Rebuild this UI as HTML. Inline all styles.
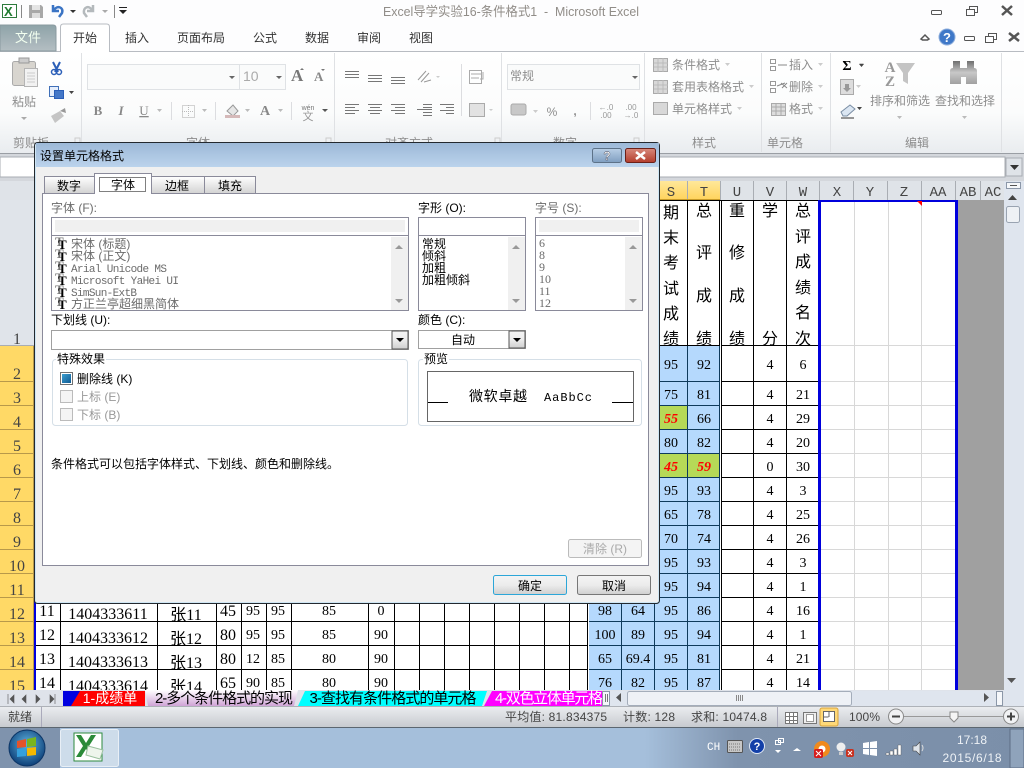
<!DOCTYPE html>
<html lang="zh"><head><meta charset="utf-8"><title>Excel</title>
<style>
html,body{margin:0;padding:0;background:#fff;width:1024px;height:768px;overflow:hidden}
svg{display:block}
text{font-family:"Liberation Sans","WenQuanYi Zen Hei","Noto Sans CJK SC",sans-serif;font-size:12px;fill:#000;white-space:pre}
.g{fill:#8d8d8d}.t{fill:#333}.r{fill:#6b6b6b}.rl{fill:#777}
.m{text-anchor:middle}
.n{font-family:"Liberation Serif","Noto Serif CJK SC",serif;font-size:14px;text-anchor:middle;fill:#000}
.b{font-family:"Liberation Serif","WenQuanYi Zen Hei",serif;font-size:16px;text-anchor:middle;fill:#000}
.h{font-family:"Liberation Serif",serif;font-size:16px;text-anchor:middle;fill:#444}
.c{font-family:"Liberation Mono",serif;font-size:14px;text-anchor:middle;fill:#444}
.v{font-family:"WenQuanYi Zen Hei","Noto Sans CJK SC",sans-serif;font-size:16px;text-anchor:middle;fill:#000}
.red{font-family:"Liberation Serif",serif;font-size:14px;font-weight:bold;font-style:italic;fill:#f00;text-anchor:middle}
.mo{font-family:"Liberation Mono","WenQuanYi Zen Hei",monospace;font-size:11px}
.sz{font-family:"Liberation Serif",serif;font-size:12px;fill:#6b6b6b}
.tg{font-family:"Liberation Serif",serif;font-size:13px;font-weight:bold;fill:#777}
.tb{font-family:"Liberation Serif",serif;font-size:13px;font-weight:bold;fill:#000}
.st{fill:#444}.w{fill:#fff}
</style></head><body>
<svg width="1024" height="768" viewBox="0 0 1024 768" xmlns="http://www.w3.org/2000/svg">
<defs>
<linearGradient id="rib" x1="0" y1="0" x2="0" y2="1"><stop offset="0" stop-color="#fff"/><stop offset=".6" stop-color="#fbfcfc"/><stop offset="1" stop-color="#e9ecef"/></linearGradient>
<linearGradient id="file" x1="0" y1="0" x2="0" y2="1"><stop offset="0" stop-color="#8ea3a8"/><stop offset="1" stop-color="#b4bec2"/></linearGradient>
<linearGradient id="ti" x1="0" y1="0" x2="0" y2="1"><stop offset="0" stop-color="#9db9d8"/><stop offset="1" stop-color="#bbd3ec"/></linearGradient>
<linearGradient id="hy" x1="0" y1="0" x2="0" y2="1"><stop offset="0" stop-color="#ffe89a"/><stop offset="1" stop-color="#ffd35b"/></linearGradient>
<linearGradient id="tab" x1="0" y1="0" x2="0" y2="1"><stop offset="0" stop-color="#fff"/><stop offset="1" stop-color="#d2d2d2"/></linearGradient>
<linearGradient id="bt" x1="0" y1="0" x2="0" y2="1"><stop offset="0" stop-color="#f4f4f4"/><stop offset=".5" stop-color="#ececec"/><stop offset="1" stop-color="#cfcfcf"/></linearGradient>
<linearGradient id="sb" x1="0" y1="0" x2="0" y2="1"><stop offset="0" stop-color="#eceef1"/><stop offset="1" stop-color="#c6c9ce"/></linearGradient>
<linearGradient id="tk" x1="0" y1="0" x2="1" y2="0"><stop offset="0" stop-color="#a5bfdb"/><stop offset=".63" stop-color="#a5bfdb"/><stop offset=".72" stop-color="#7f93ad"/><stop offset="1" stop-color="#7b8fa9"/></linearGradient>
<linearGradient id="tb2" x1="0" y1="0" x2="0" y2="1"><stop offset="0" stop-color="#fff"/><stop offset="1" stop-color="#cfa4d6"/></linearGradient>
<linearGradient id="xr" x1="0" y1="0" x2="0" y2="1"><stop offset="0" stop-color="#d8897c"/><stop offset="1" stop-color="#b33d2c"/></linearGradient>
<linearGradient id="qb" x1="0" y1="0" x2="0" y2="1"><stop offset="0" stop-color="#b9cfe6"/><stop offset="1" stop-color="#7f9ec0"/></linearGradient>
<radialGradient id="orb" cx=".5" cy=".4" r=".6"><stop offset="0" stop-color="#5fb4e0"/><stop offset="1" stop-color="#0d3f78"/></radialGradient>
<linearGradient id="chk" x1="0" y1="0" x2="1" y2="1"><stop offset="0" stop-color="#3d9fd0"/><stop offset="1" stop-color="#0e5a93"/></linearGradient>
<linearGradient id="bn" x1="0" y1="0" x2="0" y2="1"><stop offset="0" stop-color="#6f6f6f"/><stop offset=".5" stop-color="#c8c8c8"/><stop offset="1" stop-color="#a0a0a0"/></linearGradient>
</defs>

<!-- window chrome -->
<rect width="1024" height="768" fill="#fdfdfe"/>
<rect x="0" y="52" width="1024" height="101" fill="url(#rib)"/>
<rect x="0" y="51" width="1024" height="1" fill="#b8bcc2"/>
<rect x="0" y="153" width="1024" height="28" fill="#d4d7dc"/>
<rect x="0" y="153" width="1024" height="1" fill="#9a9ea4"/>
<rect x="0" y="157" width="1005" height="20" fill="#fff" stroke="#a9adb3"/>
<rect x="1006" y="158" width="16" height="18" fill="#dfe3e8" stroke="#a9adb3"/>
<path d="M1010 165h9l-4.500 5z" fill="#333"/>

<!-- QAT -->
<rect x="2.500" y="4.500" width="14" height="13" fill="#fff" stroke="#2d7a3c"/><text x="4" y="16" style="font-size:13px;font-weight:bold;fill:#1f7a2f">X</text>
<path d="M21.500 5v13M114.500 5v13" stroke="#888"/>
<path d="M29 5h12l2 2v11H29z" fill="#a8a8a8"/><rect x="32" y="5" width="8" height="5" fill="#e4e4e4"/><rect x="32" y="13" width="8" height="5" fill="#ddd"/>
<path d="M53 5v6h6M54 10c3-5 10-3 8 3l-3 4" fill="none" stroke="#3b74c4" stroke-width="2.500"/>
<path d="M70 10h6l-3 3z" fill="#333"/>
<path d="M93 5v6h-6M92 10c-3-5-9-3-8 3l3 4" fill="none" stroke="#b4b9bc" stroke-width="2.500"/>
<path d="M102 10h6l-3 3z" fill="#aaa"/>
<path d="M119 7h8v1h-8zM119 10h8l-4 4z" fill="#222"/>
<text x="383" y="16" style="font-size:13px;fill:#918d88" textLength="256" lengthAdjust="spacingAndGlyphs">Excel导学实验16-条件格式1  -  Microsoft Excel</text>
<!-- win controls -->
<g fill="none" stroke="#555"><rect x="931.500" y="10.500" width="10" height="4" rx="1"/><rect x="966.500" y="9.500" width="8" height="6"/><path d="M969.500 9V6.500h8v6H975"/><path d="M1002 6l10 9M1012 6l-10 9" stroke-width="2.500"/>
<rect x="964.500" y="36.500" width="10" height="4" rx="1"/><rect x="985.500" y="36.500" width="8" height="6"/><path d="M988.500 36v-2.500h8v6H994"/><path d="M1009 33l10 8M1019 33l-10 8" stroke-width="2.500"/><path d="M921 39l4-4 4 4-1.500 1h-5z" stroke-width="1.500"/></g>
<circle cx="947" cy="37" r="8" fill="#3f78c8" stroke="#8eaedc"/><text x="947" y="42" class="m" style="font-size:13px;font-weight:bold;fill:#fff">?</text>

<!-- tabs -->
<path d="M0 25h53q3 0 3 3v23H0z" fill="url(#file)" stroke="#8a9aa0"/>
<text x="28" y="42" class="m" style="font-size:13px;fill:#f2fff0">文件</text>
<path d="M60.500 52V27q0-3 3-3h43q3 0 3 3v25" fill="#fff" stroke="#b8bcc2"/><rect x="61" y="50" width="48" height="3" fill="#fff"/>
<g class="t"><text x="85" y="42" class="m t">开始</text><text x="137" y="42" class="m t">插入</text><text x="201" y="42" class="m t">页面布局</text><text x="265" y="42" class="m t">公式</text><text x="317" y="42" class="m t">数据</text><text x="369" y="42" class="m t">审阅</text><text x="421" y="42" class="m t">视图</text></g>

<!-- group separators -->
<path d="M81.500 53v99M334.500 53v99M501.500 53v99M644.500 53v99M761.500 53v99M830.500 53v99M1001.500 53v99" stroke="#dfe1e4"/>
<path d="M171.500 102v18M215.500 102v18M291.500 102v18M461.500 64v52M590.500 102v18" stroke="#dcdde0"/>

<!-- clipboard -->
<rect x="12.500" y="61.500" width="23" height="24" rx="2" fill="#d8d5cf" stroke="#aaa"/><rect x="19" y="58" width="10" height="5" fill="#ccc" stroke="#999"/><rect x="24.500" y="68.500" width="13" height="18" fill="#f2f2f2" stroke="#b5b5b5"/><path d="M27 73h8M27 76h8M27 79h8M27 82h8" stroke="#ccc"/>
<text x="24" y="106" class="m g">粘贴</text><path d="M21 117h6l-3 3z" fill="#aaa"/>
<path d="M53 62l5 10M60 62l-5 10" stroke="#2b5fb8" stroke-width="2"/><circle cx="54" cy="72" r="2.500" fill="none" stroke="#2b5fb8" stroke-width="1.500"/><circle cx="59" cy="72" r="2.500" fill="none" stroke="#2b5fb8" stroke-width="1.500"/>
<rect x="49.500" y="86.500" width="9" height="10" fill="#e5eefc" stroke="#4070b8"/><rect x="54.500" y="90.500" width="9" height="8" fill="#4478c8" stroke="#2b5fb8"/><path d="M69 91h5l-2.500 3z" fill="#444"/>
<path d="M51 116l9-5 4 5-9 7z" fill="#c5c5c5"/><path d="M60 111l5-3 1 5z" fill="#999"/>
<text x="31" y="147" class="m g">剪贴板</text>

<!-- font group -->
<rect x="87.500" y="64.500" width="152" height="25" fill="#fafbfb" stroke="#dfe2e5"/><rect x="239.500" y="64.500" width="46" height="25" fill="#fafbfb" stroke="#dfe2e5"/>
<path d="M229 76h6l-3 3zM276 76h6l-3 3z" fill="#666"/><text x="243" y="81" style="font-size:14px;fill:#aaa">10</text>
<text x="291" y="81" style="font-family:'Liberation Serif',serif;font-size:17px;font-weight:bold;fill:#777">A</text><path d="M300 70l2-2 2 2z" fill="#777"/>
<text x="314" y="81" style="font-family:'Liberation Serif',serif;font-size:13px;font-weight:bold;fill:#888">A</text><path d="M321 69h4l-2 2z" fill="#777"/>
<text x="98" y="115" class="m" style="font-family:'Liberation Serif',serif;font-size:13px;font-weight:bold;fill:#888">B</text>
<text x="121" y="115" class="m" style="font-family:'Liberation Serif',serif;font-size:13px;font-style:italic;font-weight:bold;fill:#888">I</text>
<text x="144" y="115" class="m" style="font-family:'Liberation Serif',serif;font-size:13px;fill:#888;text-decoration:underline">U</text>
<path d="M157 109h5l-2.500 3zM202 109h5l-2.500 3zM245 109h5l-2.500 3zM278 109h5l-2.500 3z" fill="#bbb"/><path d="M322 109h6l-3 3z" fill="#555"/>
<rect x="182.500" y="105.500" width="12" height="12" fill="none" stroke="#aaa" stroke-dasharray="1 1"/><path d="M188.500 105v12M182 111.500h12" stroke="#bbb" stroke-dasharray="1 1"/>
<path d="M227 111l6-6 5 6-5 5z" fill="#e6e6e6" stroke="#999"/><rect x="225" y="115" width="15" height="3" fill="#d5b9b9"/>
<text x="265" y="115" style="font-family:'Liberation Serif',serif;font-size:14px;font-weight:bold;fill:#888" class="m">A</text>
<text x="308" y="110" class="m" style="font-size:7px;fill:#777">wén</text><text x="308" y="120" class="m" style="font-size:11px;fill:#999">文</text>
<text x="198" y="147" class="m g">字体</text>

<!-- alignment -->
<g stroke="#777" fill="none">
<path d="M345 71.500h14M345 74.500h14M345 77.500h14"/><path d="M368 75.500h14M368 78.500h14M368 81.500h14"/><path d="M391 77.500h14M391 80.500h14M391 83.500h14"/>
<path d="M345 104.500h14M345 107.500h10M345 110.500h14M345 113.500h10"/><path d="M368 104.500h14M370 107.500h10M368 110.500h14M370 113.500h10"/><path d="M391 104.500h14M395 107.500h10M391 110.500h14M395 113.500h10"/>
<path d="M423 104.500h9M423 107.500h9M417 109.500h15M423 112.500h9M423 115.500h9"/><path d="M440 104.500h14M446 107.500h8M440 110.500h14M446 113.500h8"/>
<path d="M418 80l8-9M421 82l8-9M424 82l7-2" stroke="#999"/>
<rect x="469.500" y="70.500" width="12" height="13" stroke="#aaa"/><path d="M471 74h10M471 78h8" stroke="#aaa"/><path d="M483 72v7h-3" stroke="#aaa"/>
<rect x="469.500" y="103.500" width="15" height="13" stroke="#aaa" fill="#e2e2e2"/>
</g>
<path d="M436 76h4l-2 2zM489 109h4l-2 2z" fill="#ccc"/>
<text x="409" y="147" class="m g">对齐方式</text>

<!-- number -->
<rect x="507.500" y="64.500" width="132" height="25" fill="#fafbfb" stroke="#dfe2e5"/><text x="510" y="80" class="g">常规</text><path d="M632 76h6l-3 3z" fill="#666"/>
<rect x="511" y="104" width="15" height="11" rx="2" fill="#c8c8c8" stroke="#aaa"/><path d="M533 110h5l-2.500 3z" fill="#ccc"/>
<text x="552" y="116" class="m g" style="font-size:12px">%</text><text x="575" y="115" class="m g" style="font-weight:bold">,</text>
<text x="606" y="110" class="m" style="font-size:8px;fill:#999">←.0</text><text x="606" y="118" class="m" style="font-size:8px;fill:#999">.00</text>
<text x="631" y="110" class="m" style="font-size:8px;fill:#999">.00</text><text x="631" y="118" class="m" style="font-size:8px;fill:#999">→.0</text>
<text x="565" y="147" class="m g">数字</text>

<!-- style -->
<g fill="#d8d8d8" stroke="#aaa"><rect x="653.500" y="58.500" width="14" height="13"/><rect x="653.500" y="80.500" width="14" height="13"/><rect x="653.500" y="102.500" width="14" height="12"/></g>
<path d="M658 58v14M663 58v14M654 63h14M654 67h14M658 80v14M663 80v14M654 85h14M654 89h14" stroke="#bbb"/>
<text x="672" y="69" class="g">条件格式</text><text x="672" y="91" class="g">套用表格格式</text><text x="672" y="113" class="g">单元格样式</text>
<path d="M725 63h5l-2.500 3zM749 85h5l-2.500 3zM737 107h5l-2.500 3zM818 63h5l-2.500 3zM818 85h5l-2.500 3zM818 107h5l-2.500 3zM859 63h5l-2.500 3zM856 85h5l-2.500 3z" fill="#ccc"/><path d="M859 64h5l-2.500 3z" fill="#444"/><path d="M857 107h5l-2.500 3z" fill="#444"/>
<text x="704" y="147" class="m g">样式</text>

<!-- cells -->
<g fill="#fff" stroke="#999"><rect x="770.500" y="59.500" width="5" height="4"/><rect x="770.500" y="66.500" width="5" height="4"/><rect x="770.500" y="81.500" width="5" height="4"/><rect x="770.500" y="88.500" width="5" height="4"/></g>
<path d="M778 65h9M777 86l8-3M781 83l6 5M787 83l-5 5" stroke="#888"/>
<g fill="#ddd" stroke="#aaa"><rect x="771.500" y="103.500" width="14" height="12"/></g><path d="M776 103v12M781 103v12M771 107h14M771 111h14" stroke="#aaa"/>
<text x="789" y="69" class="g">插入</text><text x="789" y="91" class="g">删除</text><text x="789" y="113" class="g">格式</text>
<text x="785" y="147" class="m g">单元格</text>

<!-- edit -->
<text x="847" y="70" class="m" style="font-family:'Liberation Serif',serif;font-size:14px;font-weight:bold">Σ</text>
<rect x="840.500" y="79.500" width="13" height="15" fill="#ddd" stroke="#aaa"/><path d="M845 84h4v4h2l-4 4-4-4h2z" fill="#999"/>
<path d="M841 112l9-7 5 4-8 7h-4z" fill="#dbe6f2" stroke="#7a8da3"/><path d="M841 118h13" stroke="#333"/>
<path d="M896 63h19l-7 10v11l-5-3v-8z" fill="#c4c4c4"/>
<text x="890" y="72" class="m" style="font-family:'Liberation Serif',serif;font-size:15px;font-weight:bold;fill:#999">A</text><text x="890" y="86" class="m" style="font-family:'Liberation Serif',serif;font-size:15px;font-weight:bold;fill:#999">Z</text>
<path d="M950 71q0-3 3-3v-7h7v7h7v-7h7v7q3 0 3 3v13h-11v-7h-5v7h-11z" fill="url(#bn)"/>
<text x="900" y="105" class="m g" textLength="60">排序和筛选</text><text x="965" y="105" class="m g" textLength="60">查找和选择</text>
<path d="M897 116h5l-2.500 3zM962 116h5l-2.500 3z" fill="#bbb"/>
<text x="917" y="147" class="m g">编辑</text>
<path d="M75 138h5v5h-5zM326 138h5v5h-5zM495 138h5v5h-5zM634 138h5v5h-5z" fill="none" stroke="#ccc"/>

<!-- headers -->
<rect x="0" y="181" width="34" height="19" fill="#dfe3e8"/>
<rect x="34" y="181" width="970" height="19" fill="#dfe3e8"/>
<rect x="655" y="181" width="65" height="19" fill="url(#hy)"/>
<path d="M687.500 181v19M720.500 181v19M753.500 181v19M786.500 181v19M819.500 181v19M853.500 181v19M887.500 181v19M921.500 181v19M955.500 181v19M980.500 181v19M1004.500 181v19" stroke="#a9adb3"/>
<rect x="655" y="199" width="65" height="1" fill="#c79a28"/>
<g class="c"><text x="671" y="196" class="c">S</text><text x="704" y="196" class="c">T</text><text x="737" y="196" class="c">U</text><text x="770" y="196" class="c">V</text><text x="803" y="196" class="c">W</text><text x="837" y="196" class="c">X</text><text x="870" y="196" class="c">Y</text><text x="904" y="196" class="c">Z</text><text x="938" y="196" class="c">AA</text><text x="968" y="196" class="c">AB</text><text x="993" y="196" class="c">AC</text></g>

<!-- row headers -->
<rect x="0" y="200" width="34" height="146" fill="#e0e4ea"/>
<rect x="0" y="346" width="34" height="344" fill="#ffd966"/>
<path d="M0 345.500h34" stroke="#a9adb3"/>
<path d="M0 381.500h34M0 405.500h34M0 429.500h34M0 453.500h34M0 477.500h34M0 501.500h34M0 525.500h34M0 549.500h34M0 573.500h34M0 597.500h34M0 621.500h34M0 645.500h34M0 669.500h34M33.500 346v344" stroke="#b8994a"/>
<text x="17" y="344" class="h">1</text><text x="17" y="379" class="h">2</text><text x="17" y="403" class="h">3</text><text x="17" y="427" class="h">4</text><text x="17" y="451" class="h">5</text><text x="17" y="475" class="h">6</text><text x="17" y="499" class="h">7</text><text x="17" y="523" class="h">8</text><text x="17" y="547" class="h">9</text><text x="17" y="571" class="h">10</text><text x="17" y="595" class="h">11</text><text x="17" y="619" class="h">12</text><text x="17" y="643" class="h">13</text><text x="17" y="667" class="h">14</text><text x="17" y="691" class="h">15</text>

<!-- grid -->
<rect x="34" y="200" width="924" height="490" fill="#fff"/>
<rect x="589" y="346" width="131" height="344" fill="#b5d9fd"/>
<rect x="655" y="406" width="32" height="23" fill="#b6d957"/><rect x="655" y="454" width="64" height="23" fill="#b6d957"/>
<path d="M854.500 201v489M888.500 201v489M921.500 201v489" stroke="#d8d8d8"/>
<path d="M821 345.500h134M821 381.500h134M821 405.500h134M821 429.500h134M821 453.500h134M821 477.500h134M821 501.500h134M821 525.500h134M821 549.500h134M821 573.500h134M821 597.500h134M821 621.500h134M821 645.500h134M821 669.500h134" stroke="#d8d8d8"/>
<path d="M60.500 200v490M157.500 200v490M216.500 200v490M241.500 200v490M266.500 200v490M291.500 200v490M368.500 200v490M394.500 200v490M419.500 200v490M444.500 200v490M469.500 200v490M494.500 200v490M519.500 200v490M544.500 200v490M569.500 200v490M587.500 200v490M753.500 200v490M786.500 200v490M721.500 200v490" stroke="#000"/>
<path d="M621.500 200v146M654.500 200v146M687.500 200v146M719.500 200v146" stroke="#000"/>
<path d="M621.500 346v344M654.500 346v344M687.500 346v344M719.500 346v344" stroke="#0e3a5c"/>
<path d="M35 345.500h785M35 381.500h554M35 405.500h554M35 429.500h554M35 453.500h554M35 477.500h554M35 501.500h554M35 525.500h554M35 549.500h554M35 573.500h554M35 597.500h554M35 621.500h554M35 645.500h554M35 669.500h554M721 381.500h98M721 405.500h98M721 429.500h98M721 453.500h98M721 477.500h98M721 501.500h98M721 525.500h98M721 549.500h98M721 573.500h98M721 597.500h98M721 621.500h98M721 645.500h98M721 669.500h98" stroke="#000"/>
<path d="M589 381.500h131M589 405.500h131M589 429.500h131M589 453.500h131M589 477.500h131M589 501.500h131M589 525.500h131M589 549.500h131M589 573.500h131M589 597.500h131M589 621.500h131M589 645.500h131M589 669.500h131" stroke="#0e3a5c"/>
<path d="M588.500 200v490M720.500 200v490" stroke="#fff"/>
<path d="M35 200.500h785" stroke="#000"/>
<rect x="34" y="200" width="2" height="490" fill="#0000dc"/>
<rect x="818" y="200" width="3" height="490" fill="#0000dc"/><rect x="955" y="200" width="3" height="490" fill="#0000dc"/><rect x="820" y="200" width="137" height="2" fill="#0000dc"/>
<path d="M917 201h5v5z" fill="#f00"/>
<rect x="958" y="200" width="46" height="490" fill="#a0a0a0"/>

<!-- vertical text row1 -->
<text x="671" y="218" class="v">期</text><text x="671" y="243" class="v">末</text><text x="671" y="268" class="v">考</text><text x="671" y="294" class="v">试</text><text x="671" y="319" class="v">成</text><text x="671" y="344" class="v">绩</text>
<text x="704" y="216" class="v">总</text><text x="704" y="258" class="v">评</text><text x="704" y="301" class="v">成</text><text x="704" y="344" class="v">绩</text>
<text x="737" y="216" class="v">重</text><text x="737" y="258" class="v">修</text><text x="737" y="301" class="v">成</text><text x="737" y="344" class="v">绩</text>
<text x="770" y="216" class="v">学</text><text x="770" y="344" class="v">分</text>
<text x="803" y="216" class="v">总</text><text x="803" y="242" class="v">评</text><text x="803" y="267" class="v">成</text><text x="803" y="293" class="v">绩</text><text x="803" y="318" class="v">名</text><text x="803" y="344" class="v">次</text>

<!-- right data -->
<text x="671" y="369" class="n">95</text><text x="704" y="369" class="n">92</text><text x="770" y="369" class="n">4</text><text x="803" y="369" class="n">6</text>
<text x="671" y="399" class="n">75</text><text x="704" y="399" class="n">81</text><text x="770" y="399" class="n">4</text><text x="803" y="399" class="n">21</text>
<text x="671" y="423" class="red">55</text><text x="704" y="423" class="n">66</text><text x="770" y="423" class="n">4</text><text x="803" y="423" class="n">29</text>
<text x="671" y="447" class="n">80</text><text x="704" y="447" class="n">82</text><text x="770" y="447" class="n">4</text><text x="803" y="447" class="n">20</text>
<text x="671" y="471" class="red">45</text><text x="704" y="471" class="red">59</text><text x="770" y="471" class="n">0</text><text x="803" y="471" class="n">30</text>
<text x="671" y="495" class="n">95</text><text x="704" y="495" class="n">93</text><text x="770" y="495" class="n">4</text><text x="803" y="495" class="n">3</text>
<text x="671" y="519" class="n">65</text><text x="704" y="519" class="n">78</text><text x="770" y="519" class="n">4</text><text x="803" y="519" class="n">25</text>
<text x="671" y="543" class="n">70</text><text x="704" y="543" class="n">74</text><text x="770" y="543" class="n">4</text><text x="803" y="543" class="n">26</text>
<text x="671" y="567" class="n">95</text><text x="704" y="567" class="n">93</text><text x="770" y="567" class="n">4</text><text x="803" y="567" class="n">3</text>
<text x="671" y="591" class="n">95</text><text x="704" y="591" class="n">94</text><text x="770" y="591" class="n">4</text><text x="803" y="591" class="n">1</text>
<text x="605" y="615" class="n">98</text><text x="638" y="615" class="n">64</text><text x="671" y="615" class="n">95</text><text x="704" y="615" class="n">86</text><text x="770" y="615" class="n">4</text><text x="803" y="615" class="n">16</text>
<text x="605" y="639" class="n">100</text><text x="638" y="639" class="n">89</text><text x="671" y="639" class="n">95</text><text x="704" y="639" class="n">94</text><text x="770" y="639" class="n">4</text><text x="803" y="639" class="n">1</text>
<text x="605" y="663" class="n">65</text><text x="638" y="663" class="n">69.4</text><text x="671" y="663" class="n">95</text><text x="704" y="663" class="n">81</text><text x="770" y="663" class="n">4</text><text x="803" y="663" class="n">21</text>
<text x="605" y="687" class="n">76</text><text x="638" y="687" class="n">82</text><text x="671" y="687" class="n">95</text><text x="704" y="687" class="n">87</text><text x="770" y="687" class="n">4</text><text x="803" y="687" class="n">14</text>

<!-- left data -->
<text x="47" y="616" class="b">11</text><text x="108" y="619" class="b">1404333611</text><text x="186" y="620" class="b">张11</text><text x="228" y="616" class="b">45</text><text x="253" y="615" class="n">95</text><text x="278" y="615" class="n">95</text><text x="329" y="615" class="n">85</text><text x="381" y="615" class="n">0</text>
<text x="47" y="640" class="b">12</text><text x="108" y="643" class="b">1404333612</text><text x="186" y="644" class="b">张12</text><text x="228" y="640" class="b">80</text><text x="253" y="639" class="n">95</text><text x="278" y="639" class="n">95</text><text x="329" y="639" class="n">85</text><text x="381" y="639" class="n">90</text>
<text x="47" y="664" class="b">13</text><text x="108" y="667" class="b">1404333613</text><text x="186" y="668" class="b">张13</text><text x="228" y="664" class="b">80</text><text x="253" y="663" class="n">12</text><text x="278" y="663" class="n">85</text><text x="329" y="663" class="n">80</text><text x="381" y="663" class="n">90</text>
<text x="47" y="688" class="b">14</text><text x="108" y="691" class="b">1404333614</text><text x="186" y="692" class="b">张14</text><text x="228" y="688" class="b">65</text><text x="253" y="687" class="n">90</text><text x="278" y="687" class="n">85</text><text x="329" y="687" class="n">80</text><text x="381" y="687" class="n">90</text>

<!-- v scrollbar -->
<rect x="1004" y="181" width="20" height="509" fill="#dfe5ee"/>
<rect x="1006.500" y="182.500" width="14" height="6" fill="#f5f7fa" stroke="#8b97a8"/><path d="M1010 185.500h7" stroke="#555"/>
<path d="M1008 200l4.500-5 4.500 5z" fill="#444"/>
<rect x="1006.500" y="206.500" width="13" height="16" rx="2" fill="#eef1f5" stroke="#99a3b1"/>
<path d="M1007 678h9l-4.500 5z" fill="#555"/>

<!-- sheet tabs -->
<rect x="0" y="690" width="1004" height="16" fill="#dfe3ea"/><rect x="1004" y="690" width="20" height="16" fill="#dfe5ee"/>
<path d="M8 694v10M10 699l4-4v8zM26 695l-4 4 4 4zM36 695l4 4-4 4zM50 695l4 4-4 4zM55 694v10" fill="#555" stroke="#555" stroke-width=".6"/>
<rect x="63" y="691" width="82" height="15" fill="#f00"/><path d="M63 691h17l-9 15h-8z" fill="#0000e0"/>
<text x="110" y="703" class="m w" style="font-size:14px">1-成绩单</text>
<path d="M145 690h153l-4 16H148z" fill="url(#tb2)"/><text x="224" y="703" class="m" style="font-size:15px" textLength="138">2-多个条件格式的实现</text>
<path d="M305 691h182l-5 15H298z" fill="#0ff"/><text x="393" y="703" class="m" style="font-size:15px" textLength="167">3-查找有条件格式的单元格</text>
<path d="M492 691h112v15H484z" fill="#f0f"/><text x="495" y="703" class="w" style="font-size:15px" textLength="108">4-双色立体单元格</text>
<rect x="602.500" y="691.500" width="7" height="14" fill="#f5f7fa" stroke="#8b97a8"/><path d="M605.500 694v8M607.500 694v8" stroke="#777"/>
<rect x="610" y="691" width="393" height="15" fill="#dfe5ee"/>
<path d="M621 693v9l-5-4.500zM984 693v9l5-4.500z" fill="#555"/>
<rect x="627.500" y="691.500" width="224" height="14" rx="2" fill="#eef1f6" stroke="#a4adba"/><path d="M736.500 695v6M738.500 695v6M740.500 695v6M742.500 695v6" stroke="#888"/>
<rect x="996.500" y="691.500" width="6" height="14" fill="#f5f7fa" stroke="#8b97a8"/>

<!-- status -->
<rect x="0" y="706" width="1024" height="22" fill="url(#sb)"/><path d="M0 706.500h1024" stroke="#aeb2b8"/><path d="M0 727.500h1024" stroke="#5c6670"/>
<path d="M41.500 707v20M777.500 707v20" stroke="#aab"/>
<text x="8" y="721" class="st">就绪</text>
<text x="505" y="721" class="st" textLength="102">平均值: 81.834375</text><text x="623" y="721" class="st" textLength="52">计数: 128</text><text x="691" y="721" class="st" textLength="76">求和: 10474.8</text>
<rect x="785.500" y="712.500" width="12" height="11" fill="#fff" stroke="#777"/><path d="M789.500 712v12M793.500 712v12M785 716.500h13M785 720.500h13" stroke="#777"/>
<rect x="803.500" y="712.500" width="13" height="11" fill="#eee" stroke="#777"/><rect x="806.500" y="714.500" width="7" height="7" fill="#fff" stroke="#999"/>
<rect x="820" y="708" width="18" height="18" rx="2" fill="#ffd978" stroke="#d9a43a"/><rect x="823.500" y="711.500" width="11" height="10" fill="#fff" stroke="#666"/><path d="M829 711v6M823.500 717h5" stroke="#666"/>
<text x="849" y="721" class="st" style="font-size:12px" textLength="31">100%</text>
<circle cx="896" cy="716.500" r="7.500" fill="#f1f2f4" stroke="#888"/><path d="M892 716.500h8" stroke="#444" stroke-width="2"/>
<path d="M904 716.500h99" stroke="#999"/><path d="M950 712h8v6l-4 4-4-4z" fill="#f5f5f5" stroke="#888"/>
<circle cx="1011" cy="716.500" r="7.500" fill="#f1f2f4" stroke="#888"/><path d="M1007 716.500h8M1011 712.500v8" stroke="#444" stroke-width="2"/>

<!-- taskbar -->
<rect x="0" y="728" width="1024" height="40" fill="url(#tk)"/>
<rect x="0" y="728" width="60" height="40" fill="#7f93ad"/>
<circle cx="27" cy="748" r="18" fill="url(#orb)" stroke="#0c3566"/>
<path d="M17 741l9-2v8l-9 1z" fill="#e5532a"/><path d="M27 739l9-2v9l-9 1z" fill="#7ab51d"/><path d="M17 749l9-1v8l-9 1z" fill="#36a0dc"/><path d="M27 748l9-1v8l-9 1z" fill="#f5b800"/>
<rect x="60.500" y="729.500" width="58" height="37" rx="2" fill="#cddcea" stroke="#e8eff6"/>
<rect x="74" y="733" width="28" height="28" fill="#fff" stroke="#2d8a3e"/><path d="M76 735h5l5 8 5-8h5l-7 11 7 11h-5l-5-8-5 8h-5l7-11z" fill="#2a8a38"/><path d="M88 746l15 4-3 9-14-4z" fill="#eef5ec" stroke="#9bc19f"/>
<text x="707" y="750" class="w" style="font-family:'Liberation Mono',monospace;font-size:11px">CH</text>
<rect x="727.500" y="740.500" width="15" height="12" rx="1" fill="#c7c7c7" stroke="#555"/><path d="M729 744h12M729 747h12M729 750h12" stroke="#777" stroke-dasharray="1 1"/>
<circle cx="757" cy="746" r="7.500" fill="#123fa8" stroke="#dfe8f5"/><text x="757" y="750" class="m w" style="font-weight:bold;font-size:11px">?</text>
<rect x="775.500" y="740.500" width="5" height="4" fill="none" stroke="#fff"/><rect x="778.500" y="738.500" width="5" height="4" fill="none" stroke="#fff"/><path d="M775 750h6l-3 3z" fill="#fff"/>
<path d="M793 751l4-3 4 3z" fill="#fff"/>
<circle cx="822" cy="749" r="8" fill="#f08a1d"/><circle cx="822" cy="749" r="3.500" fill="#fff"/><rect x="814" y="749" width="9" height="9" rx="2" fill="#d61c1c"/><path d="M816 751l5 5M821 751l-5 5" stroke="#fff"/>
<circle cx="841" cy="747" r="4.500" fill="#eee"/><path d="M839 752h4v3h-4z" fill="#ccc"/><rect x="846" y="749" width="8" height="8" rx="2" fill="#c8301e"/><path d="M848 751l4 4M852 751l-4 4" stroke="#fff"/>
<path d="M863 743l6-1v6h-6zM870 742l7-1v7h-7zM863 749h6v6l-6-1zM870 749h7v7l-7-1z" fill="#fff"/>
<path d="M886 755v-2h3v2zM890 755v-4h3v4zM894 755v-6h3v6zM898 755v-10h3v10z" fill="#fff" stroke="#555" stroke-width=".4"/>
<path d="M913 746h3l4-4v13l-4-4h-3z" fill="#dfe4ea" stroke="#444" stroke-width=".6"/><path d="M922 745q2 3 0 6" fill="none" stroke="#ddd"/>
<text x="972" y="744" class="m w" style="font-size:12px;fill:#eef2f6">17:18</text>
<text x="972" y="762" class="m w" style="font-size:12px;fill:#eef2f6" textLength="59">2015/6/18</text>
<rect x="1010" y="729" width="14" height="39" fill="#8fa3bb" stroke="#5d6e85"/>

<!-- dialog -->
<rect x="34.500" y="142.500" width="625" height="461" rx="3" fill="#cfe6f4" stroke="#23292f"/>
<rect x="36" y="143" width="623" height="24" fill="url(#ti)"/>
<rect x="36" y="167" width="622" height="435" fill="#f0f0f0"/>
<text x="40" y="160" style="font-size:12px">设置单元格格式</text>
<rect x="592.500" y="148.500" width="29" height="14" rx="2" fill="url(#qb)" stroke="#5d7288"/><text x="607" y="160" class="m w" style="font-weight:bold;font-size:12px;stroke:#445;stroke-width:.4">?</text>
<rect x="625.500" y="148.500" width="30" height="14" rx="2" fill="url(#xr)" stroke="#6b2018"/><path d="M636 152l9 7M645 152l-9 7" stroke="#fff" stroke-width="2.500"/>

<!-- dialog panel -->
<rect x="42.500" y="193.500" width="606" height="372" fill="#fff" stroke="#8a8a9a"/>
<rect x="44.500" y="176.500" width="50" height="17" fill="url(#tab)" stroke="#8a8a9a"/>
<rect x="151.500" y="176.500" width="53" height="17" fill="url(#tab)" stroke="#8a8a9a"/>
<rect x="204.500" y="176.500" width="51" height="17" fill="url(#tab)" stroke="#8a8a9a"/>
<path d="M94.500 194v-20.500h57V194" fill="#fff" stroke="#8a8a9a"/><rect x="95" y="192" width="56" height="3" fill="#fff"/>
<rect x="99.500" y="177.500" width="46" height="14" fill="none" stroke="#000" stroke-dasharray="1 1"/>
<text x="69" y="190" class="m">数字</text><text x="123" y="189" class="m">字体</text><text x="177" y="190" class="m">边框</text><text x="230" y="190" class="m">填充</text>

<text x="51" y="212" class="r">字体 (F):</text>
<text x="418" y="212">字形 (O):</text>
<text x="535" y="212" class="r">字号 (S):</text>
<g fill="#fff" stroke="#8a8a9a"><rect x="51.500" y="217.500" width="357" height="18"/><rect x="418.500" y="217.500" width="107" height="18"/><rect x="535.500" y="217.500" width="107" height="18"/><rect x="51.500" y="235.500" width="357" height="75"/><rect x="418.500" y="235.500" width="107" height="75"/><rect x="535.500" y="235.500" width="107" height="75"/></g>
<rect x="55" y="220" width="350" height="12" fill="#f0f0f0"/><rect x="539" y="220" width="100" height="12" fill="#f0f0f0"/>
<rect x="391" y="237" width="17" height="73" fill="#f0f0f0"/><rect x="508" y="237" width="17" height="73" fill="#f0f0f0"/><rect x="625" y="237" width="17" height="73" fill="#f0f0f0"/>
<path d="M395 249l4-4 4 4zM512 249l4-4 4 4zM629 249l4-4 4 4zM395 299l4 4 4-4zM512 299l4 4 4-4zM629 299l4 4 4-4z" fill="#999"/>
<text x="55" y="246" class="tg">T</text><text x="58" y="249" class="tb">T</text>
<text x="55" y="258" class="tg">T</text><text x="58" y="261" class="tb">T</text>
<text x="55" y="270" class="tg">T</text><text x="58" y="273" class="tb">T</text>
<text x="55" y="282" class="tg">T</text><text x="58" y="285" class="tb">T</text>
<text x="55" y="294" class="tg">T</text><text x="58" y="297" class="tb">T</text>
<text x="55" y="306" class="tg">T</text><text x="58" y="309" class="tb">T</text>
<text x="71" y="248" class="r">宋体 (标题)</text><text x="71" y="260" class="r">宋体 (正文)</text>
<text x="71" y="272" class="r mo" textLength="96">Arial Unicode MS</text><text x="71" y="284" class="r mo" textLength="108">Microsoft YaHei UI</text><text x="71" y="296" class="r mo" textLength="66">SimSun-ExtB</text><text x="71" y="308" class="r">方正兰亭超细黑简体</text>
<text x="422" y="248">常规</text><text x="422" y="260">倾斜</text><text x="422" y="272">加粗</text><text x="422" y="284">加粗倾斜</text>
<text x="539" y="247" class="sz">6</text><text x="539" y="259" class="sz">8</text><text x="539" y="271" class="sz">9</text><text x="539" y="283" class="sz">10</text><text x="539" y="295" class="sz">11</text><text x="539" y="307" class="sz">12</text>

<text x="51" y="324">下划线 (U):</text><text x="418" y="324">颜色 (C):</text>
<rect x="51.500" y="330.500" width="357" height="19" fill="#fff" stroke="#a0a0a0"/><rect x="392" y="331" width="16" height="18" fill="url(#bt)" stroke="#555"/><path d="M396 338h8l-4 4z" fill="#000"/>
<rect x="418.500" y="330.500" width="107" height="18" fill="#fff" stroke="#a0a0a0"/><rect x="509" y="331" width="16" height="17" fill="url(#bt)" stroke="#555"/><path d="M513 338h8l-4 4z" fill="#000"/>
<text x="463" y="344" class="m">自动</text>

<rect x="52.500" y="359.500" width="355" height="66" rx="3" fill="#fff" stroke="#d5dfe7"/><rect x="56" y="355" width="50" height="8" fill="#fff"/><text x="57" y="363">特殊效果</text>
<rect x="418.500" y="359.500" width="223" height="66" rx="3" fill="#fff" stroke="#d5dfe7"/><rect x="423" y="355" width="26" height="8" fill="#fff"/><text x="424" y="363">预览</text>
<rect x="427.500" y="371.500" width="206" height="50" fill="#fff" stroke="#666"/>
<path d="M428 402.500h20M612 402.500h21" stroke="#000"/>
<text x="469" y="401" style="font-size:14px" textLength="58">微软卓越</text><text x="544" y="401" style="font-family:'Liberation Mono',monospace;font-size:12px" textLength="48">AaBbCc</text>

<rect x="60.500" y="372.500" width="12" height="12" fill="#fff" stroke="#707070"/><rect x="62" y="374" width="9" height="9" fill="url(#chk)"/>
<rect x="60.500" y="390.500" width="12" height="12" fill="#f4f4f4" stroke="#bbb"/><rect x="60.500" y="408.500" width="12" height="12" fill="#f4f4f4" stroke="#bbb"/>
<text x="77" y="383">删除线 (K)</text><text x="77" y="401" class="rl" style="fill:#999">上标 (E)</text><text x="77" y="419" style="fill:#999">下标 (B)</text>
<text x="51" y="468">条件格式可以包括字体样式、下划线、颜色和删除线。</text>

<rect x="568.500" y="539.500" width="73" height="18" rx="2" fill="#f4f4f4" stroke="#bbb"/><text x="605" y="553" class="m" style="fill:#aaa">清除 (R)</text>
<rect x="493.500" y="575.500" width="73" height="19" rx="2" fill="url(#bt)" stroke="#2ca6d8"/><text x="530" y="590" class="m">确定</text>
<rect x="577.500" y="575.500" width="73" height="19" rx="2" fill="url(#bt)" stroke="#777"/><text x="614" y="590" class="m">取消</text>
</svg>
</body></html>
